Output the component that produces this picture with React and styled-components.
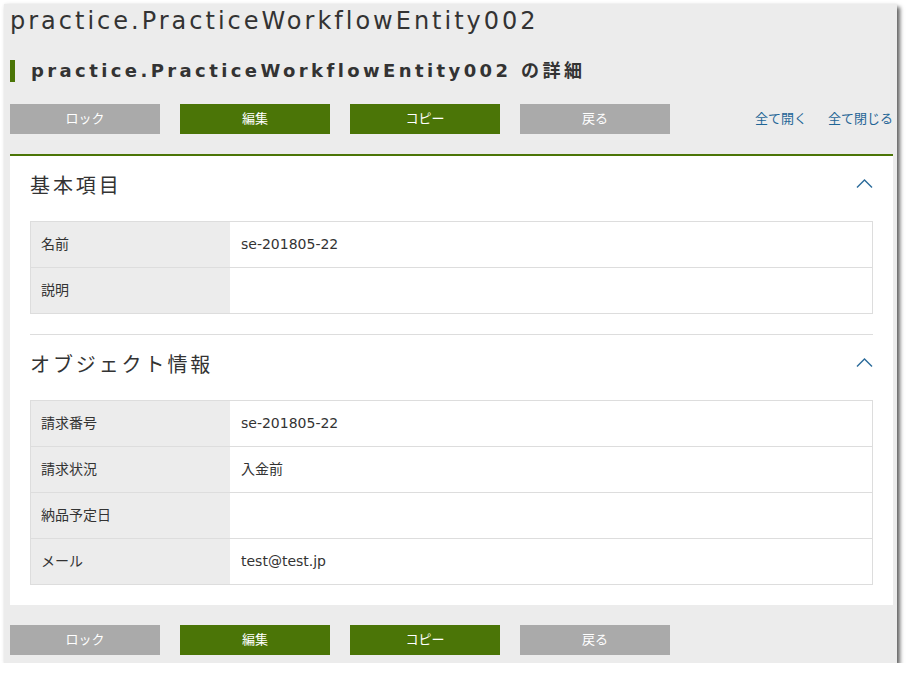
import React from "react";
import styled, { createGlobalStyle } from "styled-components";

const FONT = `"DejaVu Sans", "Noto Sans CJK JP", sans-serif`;

const Global = createGlobalStyle`
  html, body { margin: 0; padding: 0; background: #fff; }
  body { font-family: ${FONT}; color: #333; }
`;

const Window = styled.div`
  margin: 4px 0 0 4px;
  width: 893px;
  height: 659px;
  box-sizing: border-box;
  background: #ececec;
  padding: 0 4px 0 6px;
  box-shadow: 3px 3px 4px rgba(0, 0, 0, 0.6), 0 0 3px rgba(0, 0, 0, 0.08);
  display: flex;
  flex-direction: column;
`;

const Title = styled.h1`
  margin: 0;
  padding-top: 1px;
  font-family: ${FONT};
  font-size: 24px;
  line-height: 32px;
  font-weight: 400;
  letter-spacing: 3px;
  color: #333;
`;

const SubTitle = styled.h2`
  margin: 23px 0 0;
  height: 22px;
  display: flex;
  align-items: center;
  border-left: 5px solid #4b7507;
  padding-left: 16px;
  font-family: ${FONT};
  font-size: 18px;
  line-height: 22px;
  font-weight: 700;
  letter-spacing: 3.4px;
  color: #333;
`;

const Toolbar = styled.div`
  margin-top: ${(p) => p.$top}px;
  display: flex;
  align-items: center;
  gap: 20px;
  height: 30px;
`;

const Button = styled.button`
  width: 150px;
  height: 30px;
  border: 0;
  padding: 0 0 3px;
  background: ${(p) => (p.$primary ? "#4b7507" : "#aaaaaa")};
  color: #fff;
  font-family: "Noto Sans CJK JP", sans-serif;
  font-size: 13px;
  line-height: 1;
  cursor: pointer;
`;

const Links = styled.div`
  margin-left: auto;
  display: flex;
  gap: 21px;
  padding-bottom: 3px;
`;

const Link = styled.a`
  color: #1f6596;
  font-family: "Noto Sans CJK JP", sans-serif;
  font-size: 13px;
  text-decoration: none;
`;

const Panel = styled.div`
  margin-top: 20px;
  border-top: 2px solid #4b7507;
  background: #fff;
  padding: 0 20px;
`;

const Section = styled.section`
  padding: 15px 0 20px;
  border-bottom: ${(p) => (p.$last ? "0" : "1px solid #dddddd")};
`;

const SectionHead = styled.div`
  display: flex;
  align-items: center;
  justify-content: space-between;
  height: 30px;
  margin-bottom: 20px;
`;

const SectionTitle = styled.h3`
  margin: 0;
  font-family: "Noto Sans CJK JP", sans-serif;
  font-size: 20px;
  line-height: 30px;
  font-weight: 400;
  letter-spacing: 2.9px;
  color: #333;
  padding-bottom: 2px;
`;

const Chevron = styled.svg`
  width: 17px;
  height: 9px;
  margin-top: -6px;
`;

const Table = styled.div`
  border: 1px solid #dddddd;
  border-bottom: 0;
`;

const Row = styled.div`
  display: grid;
  grid-template-columns: 199px 1fr;
  height: 46px;
  box-sizing: border-box;
  border-bottom: 1px solid #dddddd;
  font-family: ${FONT};
  font-size: 14px;
  line-height: 20px;
`;

const Label = styled.div`
  background: #ececec;
  display: flex;
  align-items: center;
  padding: 0 0 2px 10px;
`;

const Value = styled.div`
  display: flex;
  align-items: center;
  padding: 0 0 2px 11px;
`;

const Buttons = () => (
  <>
    <Button>ロック</Button>
    <Button $primary>編集</Button>
    <Button $primary>コピー</Button>
    <Button>戻る</Button>
  </>
);

const Up = () => (
  <Chevron viewBox="0 0 17 9">
    <polyline points="1,8.5 8.5,1 16,8.5" fill="none" stroke="#2a6a9a" strokeWidth="1.4" />
  </Chevron>
);

const sections = [
  {
    title: "基本項目",
    rows: [
      ["名前", "se-201805-22"],
      ["説明", ""],
    ],
  },
  {
    title: "オブジェクト情報",
    rows: [
      ["請求番号", "se-201805-22"],
      ["請求状況", "入金前"],
      ["納品予定日", ""],
      ["メール", "test@test.jp"],
    ],
  },
];

export default function App() {
  return (
    <>
      <Global />
      <Window>
        <Title>practice.PracticeWorkflowEntity002</Title>
        <SubTitle>practice.PracticeWorkflowEntity002 の詳細</SubTitle>
        <Toolbar $top={22}>
          <Buttons />
          <Links>
            <Link href="#">全て開く</Link>
            <Link href="#">全て閉じる</Link>
          </Links>
        </Toolbar>
        <Panel>
          {sections.map((s, i) => (
            <Section key={s.title} $last={i === sections.length - 1}>
              <SectionHead>
                <SectionTitle>{s.title}</SectionTitle>
                <Up />
              </SectionHead>
              <Table>
                {s.rows.map(([k, v]) => (
                  <Row key={k}>
                    <Label>{k}</Label>
                    <Value>{v}</Value>
                  </Row>
                ))}
              </Table>
            </Section>
          ))}
        </Panel>
        <Toolbar $top={20}>
          <Buttons />
        </Toolbar>
      </Window>
    </>
  );
}
